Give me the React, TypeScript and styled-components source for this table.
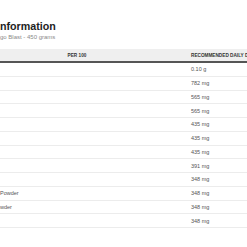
import React from 'react';
import styled, { createGlobalStyle } from 'styled-components';

const GlobalStyle = createGlobalStyle`
  html, body {
    margin: 0;
    padding: 0;
    background: #ffffff;
    overflow: hidden;
  }
  body {
    font-family: "Liberation Sans", Arial, sans-serif;
  }
`;

const Page = styled.div`
  width: 247px;
  height: 247px;
  overflow: hidden;
  padding-top: 20px;
  box-sizing: border-box;
`;

const Title = styled.h1`
  margin: 0;
  font-size: 10.7px;
  line-height: 13px;
  font-weight: 700;
  color: #222;
  white-space: nowrap;
`;

const Subtitle = styled.p`
  margin: 0 0 8px;
  font-size: 6px;
  line-height: 8px;
  color: #8a8a8a;
  white-space: nowrap;
`;

const Table = styled.div`
  display: grid;
  grid-template-columns: 56px 42px 89px 1fr;
  width: 300px;
`;

const HeadCell = styled.div<{ $align?: string }>`
  height: 12px;
  background: #efefef;
  border-bottom: 2px solid #555;
  display: flex;
  align-items: center;
  justify-content: ${(p) => p.$align || 'flex-start'};
  padding-left: ${(p) => (p.$align === 'center' ? '0' : '4px')};
  font-size: 4.7px;
  font-weight: 700;
  color: #333;
  text-transform: uppercase;
  white-space: nowrap;
  overflow: hidden;
`;

const Cell = styled.div<{ $pad?: boolean }>`
  height: 13.75px;
  box-sizing: border-box;
  border-bottom: 1px solid #ececec;
  display: flex;
  align-items: center;
  padding-left: ${(p) => (p.$pad ? '4px' : '0')};
  font-size: 5.5px;
  color: #555;
  white-space: nowrap;
  overflow: hidden;
`;

const rows = [
  { name: '', value: '0.10 g' },
  { name: '', value: '782 mg' },
  { name: '', value: '565 mg' },
  { name: '', value: '565 mg' },
  { name: '', value: '435 mg' },
  { name: '', value: '435 mg' },
  { name: '', value: '435 mg' },
  { name: '', value: '391 mg' },
  { name: '', value: '348 mg' },
  { name: 'Powder', value: '348 mg' },
  { name: 'wder', value: '348 mg' },
  { name: '', value: '348 mg' },
];

const App: React.FC = () => (
  <>
    <GlobalStyle />
    <Page>
      <Title>nformation</Title>
      <Subtitle>go Blast - 450 grams</Subtitle>
      <Table>
        <HeadCell />
        <HeadCell $align="center">Per 100</HeadCell>
        <HeadCell />
        <HeadCell>Recommended daily dose</HeadCell>
        {rows.map((row, i) => (
          <React.Fragment key={i}>
            <Cell>{row.name}</Cell>
            <Cell />
            <Cell />
            <Cell $pad>{row.value}</Cell>
          </React.Fragment>
        ))}
      </Table>
    </Page>
  </>
);

export default App;
